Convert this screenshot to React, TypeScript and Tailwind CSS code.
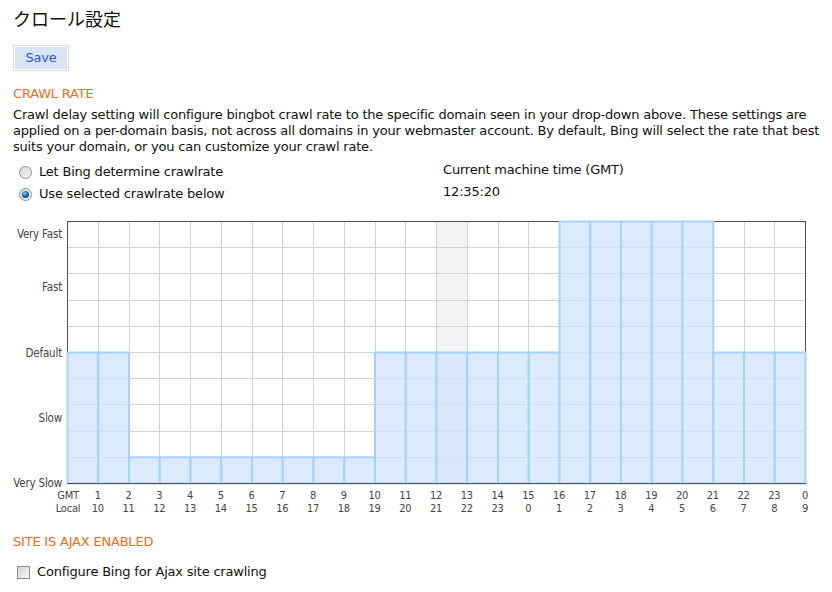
import React from "react";

const X0 = 67;
const X1 = 805;
const YT = 16; // 221 page
const YB = 278; // 483 page
const CW = (X1 - X0) / 24;
const RH = (YB - YT) / 10;
const LEVELS = [5, 5, 1, 1, 1, 1, 1, 1, 1, 1, 5, 5, 5, 5, 5, 5, 10, 10, 10, 10, 10, 5, 5, 5];
const GMT = ["1", "2", "3", "4", "5", "6", "7", "8", "9", "10", "11", "12", "13", "14", "15", "16", "17", "18", "19", "20", "21", "22", "23", "0"];
const LOCAL = ["10", "11", "12", "13", "14", "15", "16", "17", "18", "19", "20", "21", "22", "23", "0", "1", "2", "3", "4", "5", "6", "7", "8", "9"];
const YLABELS: [string, number][] = [
  ["Very Fast", 234],
  ["Fast", 287],
  ["Default", 353],
  ["Slow", 418],
  ["Very Slow", 483],
];
const GY = 290.2;
const LY = 303.2;

function Chart() {
  const px = (v: number) => Math.round(v) + 0.5;
  return (
    <svg width={832} height={315} className="block" style={{ fontFamily: '"DejaVu Sans Condensed", "DejaVu Sans", sans-serif' }}>
      <rect x={X0 + 12 * CW} y={YT} width={CW} height={YB - YT} fill="#f3f3f3" />
      {Array.from({ length: 23 }, (_, i) => (
        <line key={"v" + i} x1={px(X0 + (i + 1) * CW)} x2={px(X0 + (i + 1) * CW)} y1={YT} y2={YB} stroke="#d3d3d3" strokeWidth={1} />
      ))}
      {Array.from({ length: 9 }, (_, j) => (
        <line key={"h" + j} x1={X0} x2={X1} y1={px(YT + (j + 1) * RH)} y2={px(YT + (j + 1) * RH)} stroke="#d3d3d3" strokeWidth={1} />
      ))}
      <rect x={X0 + 0.5} y={YT + 0.5} width={X1 - X0} height={YB - YT} fill="none" stroke="#505050" strokeWidth={1} />
      {LEVELS.map((l, i) => {
        const h = l * RH;
        return (
          <rect
            key={"b" + i}
            x={X0 + i * CW + 0.5}
            y={YB - h + 0.5}
            width={CW}
            height={h}
            fill="#cfe3fc"
            fillOpacity={0.75}
            stroke="#a7d3fa"
            strokeWidth={2}
          />
        );
      })}
      <line x1={X0} x2={X1 + 1} y1={YB + 0.5} y2={YB + 0.5} stroke="#505050" strokeWidth={1} />
      {YLABELS.map(([t, y]) => (
        <text key={t} x={62} y={y - 205} dy="0.36em" textAnchor="end" fontSize={11.5} fill="#444">
          {t}
        </text>
      ))}
      <text x={68} y={GY} dy="0.36em" textAnchor="middle" fontSize={11} fill="#444">GMT</text>
      <text x={68} y={LY} dy="0.36em" textAnchor="middle" fontSize={11} fill="#444">Local</text>
      {GMT.map((g, i) => (
        <text key={"g" + i} x={X0 + (i + 1) * CW} y={GY} dy="0.36em" textAnchor="middle" fontSize={11} fill="#444">
          {g}
        </text>
      ))}
      {LOCAL.map((g, i) => (
        <text key={"l" + i} x={X0 + (i + 1) * CW} y={LY} dy="0.36em" textAnchor="middle" fontSize={11} fill="#444">
          {g}
        </text>
      ))}
    </svg>
  );
}

function Radio({ checked }: { checked?: boolean }) {
  return (
    <span className="relative inline-flex h-[13px] w-[13px] shrink-0 items-center justify-center rounded-full border border-[#8e8f8f] bg-[linear-gradient(135deg,#d6d6d6,#f4f4f4)]">
      {checked && (
        <span className="h-[7px] w-[7px] rounded-full bg-[radial-gradient(circle_at_40%_35%,#7cc8f5,#1a5596_55%,#0d3563)]" />
      )}
    </span>
  );
}

export default function App() {
  return (
    <div
      className="h-[592px] w-[832px] overflow-hidden bg-white text-[13px] leading-[16px] tracking-[-0.2px] text-[#111]"
      style={{ fontFamily: '"DejaVu Sans", sans-serif' }}
    >
      <h1 className="mt-[6px] px-[13px] text-[18px] leading-[24px] tracking-normal font-['Noto_Sans_CJK_JP',sans-serif]">クロール設定</h1>
      <div className="mt-[15px] px-[13px]">
        <div className="inline-flex h-[26px] w-[56px] items-center justify-center border border-[#dcdcdc] bg-white p-px">
          <div className="flex h-full w-full items-center justify-center bg-[#d9e5f7] text-[#2b55cc]">Save</div>
        </div>
      </div>
      <div className="mt-[15px] px-[13px] text-[#f06b24]">CRAWL RATE</div>
      <div className="mt-[5px] px-[13px]">
        <div className="whitespace-nowrap">
          Crawl delay setting will configure bingbot crawl rate to the specific domain seen in your drop-down above. These settings are
        </div>
        <div className="whitespace-nowrap">
          applied on a per-domain basis, not across all domains in your webmaster account. By default, Bing will select the rate that best
        </div>
        <div className="whitespace-nowrap">suits your domain, or you can customize your crawl rate.</div>
      </div>
      <div className="mt-[6px] flex">
        <div className="w-[443px] pl-[19px]">
          <div className="flex h-[22px] items-center gap-[7px]">
            <Radio />
            <span>Let Bing determine crawlrate</span>
          </div>
          <div className="flex h-[22px] items-center gap-[7px]">
            <Radio checked />
            <span>Use selected crawlrate below</span>
          </div>
        </div>
        <div className="-mt-[2px]">
          <div className="flex h-[22px] items-center">Current machine time (GMT)</div>
          <div className="flex h-[22px] items-center">12:35:20</div>
        </div>
      </div>
      <Chart />
      <div className="mt-[14px] px-[13px] text-[#f06b24]">SITE IS AJAX ENABLED</div>
      <div className="mt-[11px] flex h-[22px] items-center gap-[7px] pl-[17px]">
        <span className="h-[13px] w-[13px] border border-[#8e8f8f] bg-[linear-gradient(135deg,#d2d2d2,#f6f6f6)]" />
        <span>Configure Bing for Ajax site crawling</span>
      </div>
    </div>
  );
}
